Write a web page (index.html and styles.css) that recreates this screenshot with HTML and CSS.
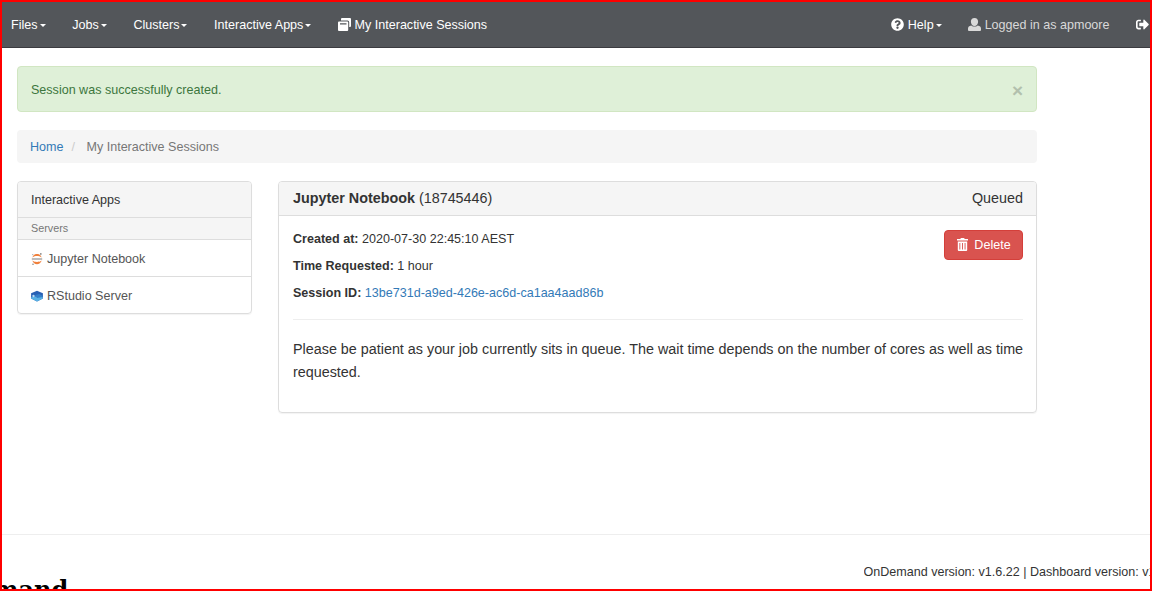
FILE: index.html
```html
<!DOCTYPE html>
<html lang="en">
<head>
<meta charset="utf-8">
<title>My Interactive Sessions</title>
<link rel="stylesheet" href="styles.css">
</head>
<body>
<div class="page">
  <nav class="navbar">
    <a class="nav-link">Files<i class="caret"></i></a>
    <a class="nav-link">Jobs<i class="caret"></i></a>
    <a class="nav-link">Clusters<i class="caret"></i></a>
    <a class="nav-link">Interactive Apps<i class="caret"></i></a>
    <a class="nav-link">
      <svg class="nav-icon" viewBox="0 0 13 13"><path fill="#fff" d="M4 0h8q1 0 1 1v7q0 1-1 1h-.8V4.200q0-1.600-1.600-1.600H3V1q0-1 1-1z"/><path fill="#fff" fill-rule="evenodd" d="M1 3.500h8.200q1 0 1 1V12q0 1-1 1H1q-1 0-1-1V4.500q0-1 1-1zM2 5.300v1.100h6.500V5.300z"/></svg>
      My Interactive Sessions</a>
    <div class="nav-right">
      <a class="nav-link">
        <svg class="nav-icon" viewBox="0 0 512 512"><path fill="#fff" d="M504 256c0 137-111 248-248 248S8 393 8 256 119 8 256 8s248 111 248 248zM262.700 90c-54.500 0-89.300 23-116.500 63.800-3.500 5.300-2.400 12.400 2.700 16.300l34.700 26.300c5.200 3.900 12.600 3 16.700-2.100 17.900-22.700 30.100-35.800 57.300-35.800 20.400 0 45.700 13.100 45.700 33 0 15-12.400 22.700-32.500 34C247.100 238.500 216 255 216 296v4c0 6.600 5.400 12 12 12h56c6.600 0 12-5.400 12-12v-1.300c0-28.500 83.200-29.600 83.200-106.700 0-58-60.200-102-116.500-102zM256 338c-25.400 0-46 20.600-46 46s20.600 46 46 46 46-20.600 46-46-20.600-46-46-46z"/></svg>
        Help<i class="caret"></i></a>
      <span class="nav-link nav-user">
        <svg class="nav-icon" viewBox="0 0 13 13"><path fill="#d9d9d9" d="M6.500 0C8.900 0 10.100 1.600 10.100 3.700S8.700 8 6.500 8 2.900 5.800 2.900 3.700 4.100 0 6.500 0zM3.200 7.400q3.300 2.400 6.600 0Q13 8 13 10.500V12q0 1-1 1H1q-1 0-1-1v-1.500Q0 8 3.200 7.400z"/></svg>
        Logged in as apmoore</span>
      <a class="nav-link">
        <svg class="nav-icon" viewBox="0 0 512 512"><path fill="#fff" d="M497 273L329 441c-15 15-41 4.500-41-17v-96H152c-13.300 0-24-10.700-24-24v-96c0-13.300 10.700-24 24-24h136V88c0-21.400 25.900-32 41-17l168 168c9.300 9.400 9.300 24.600 0 34zM192 436v-40c0-6.600-5.400-12-12-12H96c-17.700 0-32-14.300-32-32V160c0-17.700 14.300-32 32-32h84c6.600 0 12-5.400 12-12V76c0-6.600-5.400-12-12-12H96c-53 0-96 43-96 96v192c0 53 43 96 96 96h84c6.600 0 12-5.400 12-12z"/></svg>
      </a>
    </div>
  </nav>

  <main class="container">
    <div class="alert"><span>Session was successfully created.</span><span class="close">×</span></div>
    <div class="breadcrumb"><a class="link">Home</a><span class="slash">/</span><span>My Interactive Sessions</span></div>
    <div class="columns">
      <aside class="panel side">
        <div class="side-head">Interactive Apps</div>
        <div class="side-sub">Servers</div>
        <a class="side-item">
          <svg class="app-icon" viewBox="0 0 12 12"><path fill="#f0803c" d="M1.300 4.600C2 2 4 1 6 1s4 1 4.700 3.600C9 3.300 7.600 3.100 6 3.100s-3 .2-4.700 1.500zM1.300 7.600C3 8.800 4.400 9 6 9s3-.2 4.700-1.400C10 10 8 11.200 6 11.200S2 10 1.300 7.600z"/><path stroke="#b5b5b5" stroke-width="1.800" d="M.8 6h10.400"/><circle cx="9.800" cy=".9" r=".9" fill="#888"/><circle cx="2" cy="11.200" r=".8" fill="#888"/><circle cx="1.800" cy="1.600" r=".6" fill="#999"/></svg>
          Jupyter Notebook</a>
        <a class="side-item">
          <svg class="app-icon" viewBox="0 0 12 12"><path fill="#2860b4" d="M6 .7l5.900 2.500v5.400L6 11.500.1 8.600V3.200z"/><path fill="#58b1e4" d="M.1 7.200l5.900-1 5.900 1v1.400L6 11.500.1 8.600z"/><path fill="#347fc9" d="M4 5l4.500-1 3.200 2v1L6 8z"/><circle cx="2.500" cy="6" r="1.200" fill="#b9dcf4"/></svg>
          RStudio Server</a>
      </aside>
      <section class="panel session">
        <header class="session-head"><span><strong>Jupyter Notebook</strong> (18745446)</span><span>Queued</span></header>
        <div class="session-body">
          <div class="details">
            <div>
              <p class="field"><strong>Created at:</strong> 2020-07-30 22:45:10 AEST</p>
              <p class="field"><strong>Time Requested:</strong> 1 hour</p>
              <p class="field"><strong>Session ID:</strong> <a class="link">13be731d-a9ed-426e-ac6d-ca1aa4aad86b</a></p>
            </div>
            <button class="delete">
              <svg class="trash" viewBox="0 0 11 13"><path fill="#fff" fill-rule="evenodd" d="M3.500 1V.5Q3.500 0 4 0h3q.5 0 .5.500V1H11v1.500H0V1zM.8 3.500h9.400V12q0 1-1 1H1.800q-1 0-1-1zM2.400 5v6.500h.9V5zm2.600 0v6.500h.9V5zm2.600 0v6.500h.9V5z"/></svg>
              Delete</button>
          </div>
          <p class="message">Please be patient as your job currently sits in queue. The wait time depends on the number of cores as well as time requested.</p>
        </div>
      </section>
    </div>
  </main>

  <footer class="footer">
    <div class="logo">mand</div>
    <div class="version">OnDemand version: v1.6.22 | Dashboard version: v1</div>
  </footer>
</div>
</body>
</html>
```
FILE: styles.css
```css
* { box-sizing: border-box; }
body { margin: 0; font: 12.550px/18px "Liberation Sans", Arial, sans-serif; color: #333; background: #fff; }
.page { height: 591px; border: 2px solid #f00; overflow: hidden; display: flex; flex-direction: column; }
.navbar { height: 46px; flex: none; display: flex; align-items: center; gap: 26.700px; padding-left: 9px; background: #53565a; border-bottom: 1px solid #3b3b40; }
.nav-link { display: flex; align-items: center; color: #fff; white-space: nowrap; }
.nav-user { color: #d9d9d9; }
.nav-icon { width: 13px; height: 13px; margin-right: 3.500px; flex: none; }
.caret { border: 3.500px solid transparent; border-top-color: #fff; border-bottom: 0; margin-left: 2px; margin-top: 2px; }
.caret { border-width: 3px 3px 0; }
.nav-right { display: flex; gap: 26.500px; margin-left: auto; }
.nav-right .nav-link:last-child { width: 14px; }
.container { width: 1020px; margin: 18px 0 0 15px; }
.alert { height: 46px; padding: 1px 13px 0; display: flex; align-items: center; justify-content: space-between; background: #dff0d8; border: 1px solid #d1e6c2; border-radius: 4px; color: #3c763d; }
.close { font-size: 19px; font-weight: bold; color: #b2c0ad; margin-top: 2px; }
.breadcrumb { height: 33px; margin: 18px 0; padding: 0 13px; display: flex; align-items: center; background: #f5f5f5; border-radius: 4px; color: #777; }
.slash { color: #ccc; margin: 0 11.500px 0 8px; }
.link { color: #337ab7; }
.columns { display: flex; align-items: flex-start; justify-content: space-between; }
.panel { border: 1px solid #ddd; border-radius: 4px; box-shadow: 0 1px 1px rgba(0,0,0,.05); overflow: hidden; }
.side { width: 235px; }
.side-head { height: 35px; padding: 9px 13px; background: #f5f5f5; }
.side-sub { height: 22px; padding: 0 13px; font-size: 10.800px; line-height: 20px; color: #777; background: #f5f5f5; border-top: 1px solid #ddd; }
.side-item { height: 37px; padding: 1px 13px 0; display: flex; align-items: center; gap: 4px; color: #555; border-top: 1px solid #ddd; }
.app-icon { width: 12px; height: 12px; }
.session { width: 759px; height: 232px; }
.session-head { height: 34px; padding: 0 13px 2px 14px; display: flex; align-items: center; justify-content: space-between; font-size: 14.350px; background: #f5f5f5; border-bottom: 1px solid #ddd; }
.session-body { padding: 14px 13px 0 14px; }
.details { display: flex; justify-content: space-between; align-items: flex-start; height: 90px; border-bottom: 1px solid #eee; }
.field { margin: 0 0 9px; }
.delete { width: 79px; height: 30px; display: flex; align-items: center; justify-content: center; gap: 6px; font: inherit; color: #fff; background: #d9534f; border: 1px solid #d43f3a; border-radius: 4px; padding: 0 0 0 1px; }
.trash { width: 11px; height: 13px; margin-top: -1px; }
.message { margin: 18px -3px 0 0; font-size: 14.350px; line-height: 23px; }
.footer { height: 55px; flex: none; margin-top: auto; border-top: 1px solid #eee; display: flex; justify-content: space-between; overflow: hidden; }
.logo { margin: 41px 0 0 -9px; color: #000; font: bold 24px/28px "DejaVu Serif", serif; }
.version { width: 286.500px; padding-top: 28px; white-space: nowrap; overflow: hidden; }
```
